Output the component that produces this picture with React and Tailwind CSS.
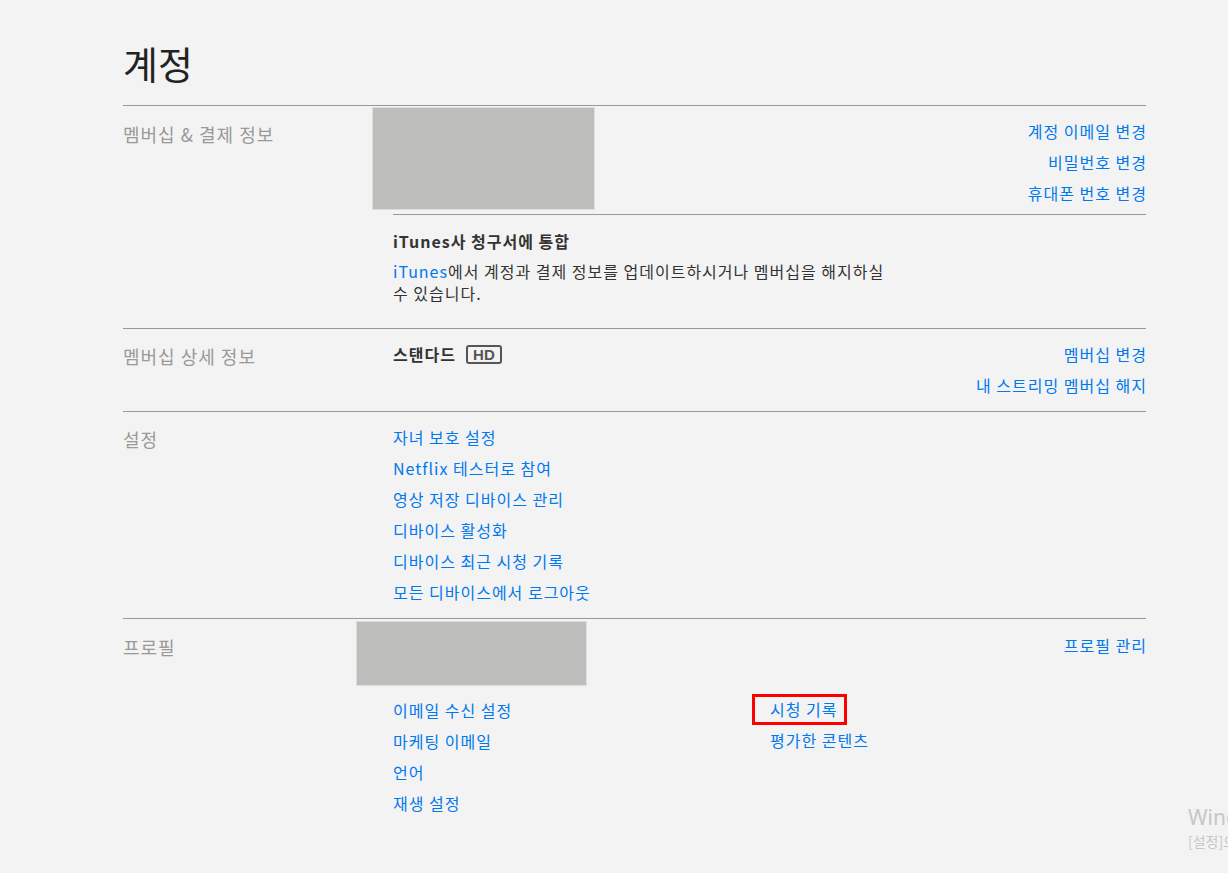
import React from 'react';

const font = { fontFamily: '"Noto Sans CJK KR", "Noto Sans", sans-serif' };

function Link({ children, className = '' }) {
  return (
    <a href="#" className={`text-[#0078ee] hover:underline ${className}`}>
      {children}
    </a>
  );
}

function Label({ children, width = 'w-[249px]', className = '' }) {
  return (
    <div className={`${width} shrink-0 text-[18px] leading-6 tracking-[1px] text-[#999] ${className}`}>
      {children}
    </div>
  );
}

export default function App() {
  return (
    <div className="relative min-h-[873px] overflow-hidden bg-[#f3f3f3] text-[#333]" style={font}>
      <div className="ml-[123px] w-[1023px] pt-[38px] tracking-[1px]">
        <h1 className="text-[38px] leading-[50px] font-normal tracking-normal text-[#222]">계정</h1>

        {/* 멤버십 & 결제 정보 */}
        <div className="mt-[17px] border-t border-[#999]">
          <div className="flex">
            <Label className="pt-[16px]">멤버십 &amp; 결제 정보</Label>
            <div className="mt-[1px] h-[103px] w-[223px] border border-[#ddd] bg-[#bdbdbb]" />
            <div className="-mr-[1px] flex flex-1 flex-col items-end pt-[10px] text-[16px] leading-[31px]">
              <Link>계정 이메일 변경</Link>
              <Link>비밀번호 변경</Link>
              <Link>휴대폰 번호 변경</Link>
            </div>
          </div>
          <div className="ml-[270px] mt-[4px] border-t border-[#999] pt-[14px] pb-[24px]">
            <div className="text-[16px] font-bold leading-6 text-[#333]">iTunes사 청구서에 통합</div>
            <p className="mt-[7px] w-[500px] text-[16px] leading-[22px] text-[#333]">
              <Link>iTunes</Link>에서 계정과 결제 정보를 업데이트하시거나 멤버십을 해지하실 수 있습니다.
            </p>
          </div>
        </div>

        {/* 멤버십 상세 정보 */}
        <div className="flex border-t border-[#999] pb-[10px]">
          <Label className="pt-[15px]">멤버십 상세 정보</Label>
          <div className="-mr-[1px] flex flex-1 items-start justify-between pt-[10px] pl-[21px] text-[16px] leading-[31px]">
            <div className="flex items-center gap-[10px]">
              <span className="font-bold text-[#333]">스탠다드</span>
              <span
                className="flex h-[19px] w-[36px] items-center justify-center rounded-[3px] border-2 border-[#555] text-[15px] font-bold leading-none tracking-normal text-[#555]"
                style={{ fontFamily: '"Liberation Sans", Arial, sans-serif' }}
              >
                HD
              </span>
            </div>
            <div className="flex flex-col items-end">
              <Link>멤버십 변경</Link>
              <Link>내 스트리밍 멤버십 해지</Link>
            </div>
          </div>
        </div>

        {/* 설정 */}
        <div className="flex border-t border-[#999] pb-[10px]">
          <Label className="pt-[15px]">설정</Label>
          <div className="flex flex-1 flex-col items-start pt-[10px] pl-[21px] text-[16px] leading-[31px]">
            <Link>자녀 보호 설정</Link>
            <Link>Netflix 테스터로 참여</Link>
            <Link>영상 저장 디바이스 관리</Link>
            <Link>디바이스 활성화</Link>
            <Link>디바이스 최근 시청 기록</Link>
            <Link>모든 디바이스에서 로그아웃</Link>
          </div>
        </div>

        {/* 프로필 */}
        <div className="border-t border-[#999]">
          <div className="flex">
            <Label width="w-[233px]" className="pt-[16px]">프로필</Label>
            <div className="mt-[2px] h-[65px] w-[231px] border border-[#ddd] bg-[#bdbdbb]" />
            <div className="-mr-[1px] flex flex-1 justify-end pt-[11px] text-[16px] leading-[31px]">
              <Link>프로필 관리</Link>
            </div>
          </div>
          <div className="ml-[270px] mt-[9px] flex text-[16px] leading-[31px]">
            <div className="flex w-[377px] flex-col items-start">
              <Link>이메일 수신 설정</Link>
              <Link>마케팅 이메일</Link>
              <Link>언어</Link>
              <Link>재생 설정</Link>
            </div>
            <div className="flex flex-col items-start">
              <div className="-ml-[18px] -mt-[1px] w-[95px] border-[3px] border-[#f00] pl-[15px] pb-[1px] leading-[24px]">
                <Link>시청 기록</Link>
              </div>
              <Link>평가한 콘텐츠</Link>
            </div>
          </div>
        </div>
      </div>

      {/* Windows 정품 인증 watermark */}
      <div className="absolute left-[1188px] top-[803px] whitespace-nowrap text-[#c6c6c6]">
        <div className="text-[21px] leading-[28px]" style={{ fontFamily: '"Noto Sans", sans-serif' }}>Windows 정품 인증</div>
        <div className="text-[14px] leading-[20px]">[설정]으로 이동하여 Windows를 정품 인증합니다.</div>
      </div>
    </div>
  );
}
